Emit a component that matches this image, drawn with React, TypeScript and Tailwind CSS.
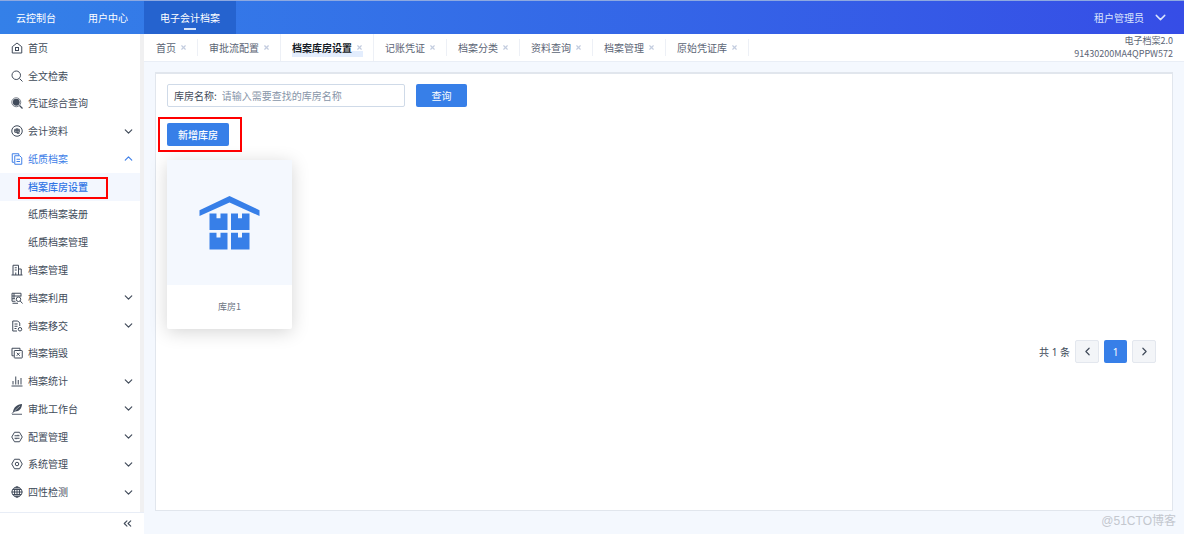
import { ReactNode, useState } from "react";
import { ChevronDown, ChevronLeft, ChevronRight, ChevronUp, ChevronsLeft, X } from "lucide-react";
import clsx from "clsx";

interface MenuItem {
  label: string;
  icon: ReactNode;
  expandable?: boolean;
  children?: string[];
}

const Icon = ({ children }: { children: ReactNode }) => (
  <svg
    viewBox="0 0 24 24"
    className="w-3 h-3 shrink-0"
    fill="none"
    stroke="currentColor"
    strokeWidth="2"
    aria-hidden="true"
  >
    {children}
  </svg>
);

const menu: MenuItem[] = [
  {
    label: "首页",
    icon: (
      <Icon>
        <path d="M2.5 22V9.5L12 2l9.5 7.5V22z" strokeLinejoin="round" />
        <rect x="9" y="11" width="6" height="6" />
      </Icon>
    ),
  },
  {
    label: "全文检索",
    icon: (
      <Icon>
        <circle cx="10.5" cy="10.5" r="8.5" />
        <path d="M17 17l6 6" />
      </Icon>
    ),
  },
  {
    label: "凭证综合查询",
    icon: (
      <Icon>
        <circle cx="10.5" cy="10.5" r="9" strokeWidth="1.4" />
        <circle cx="10.5" cy="10.5" r="6.8" fill="currentColor" stroke="none" />
        <path d="M17 17l6 6" strokeWidth="2.4" />
      </Icon>
    ),
  },
  {
    label: "会计资料",
    expandable: true,
    icon: (
      <Icon>
        <circle cx="12" cy="12" r="10.5" />
        <path d="M7.5 8.5h9v6h-9zM7.5 11.5h9M12 6v10.5h5" />
      </Icon>
    ),
  },
  {
    label: "纸质档案",
    expandable: true,
    children: ["档案库房设置", "纸质档案装册", "纸质档案管理"],
    icon: (
      <Icon>
        <path d="M6 18.5H2.5v-17h13V5" />
        <path d="M7.5 5.5h10l4 4v13h-14z" />
        <path d="M11 12.5h7M11 17h7" />
      </Icon>
    ),
  },
  {
    label: "档案管理",
    icon: (
      <Icon>
        <path d="M4 22V2.5h11V22M15 10h5.5v12M1 22h22" />
        <path d="M7.5 7.5h4M7.5 12h4M9.5 22v-5" />
      </Icon>
    ),
  },
  {
    label: "档案利用",
    expandable: true,
    icon: (
      <Icon>
        <path d="M9 18.5H2V2.5h18V9M2 8h18M6 2.5V14M2 13.5h6" />
        <circle cx="15" cy="14.5" r="4.5" />
        <path d="M18.5 18l4.5 5M3 22.5h11" />
      </Icon>
    ),
  },
  {
    label: "档案移交",
    expandable: true,
    icon: (
      <Icon>
        <path d="M12 22H3.5V2h10l4 4v6" />
        <path d="M7 8h6M7 12.5h6M7 17h4" />
        <circle cx="18" cy="18.5" r="3.5" />
      </Icon>
    ),
  },
  {
    label: "档案销毁",
    icon: (
      <Icon>
        <path d="M5.5 17.5H2v-15h16V6" />
        <rect x="6.5" y="7" width="16" height="15" rx="1" />
        <path d="M11.5 11.5l6 6M17.5 11.5l-6 6" />
      </Icon>
    ),
  },
  {
    label: "档案统计",
    expandable: true,
    icon: (
      <Icon>
        <path d="M1 22h22M4 19v-7M9.5 19V3M14.5 19V10M20 19V6" />
      </Icon>
    ),
  },
  {
    label: "审批工作台",
    expandable: true,
    icon: (
      <Icon>
        <path d="M4 18C5 9 12 3 22 2c0 8-5 15-14 15z" fill="currentColor" stroke="none" />
        <path d="M7 16L18 6" stroke="white" strokeWidth="1" />
        <path d="M2 21l5-5M2 22.5h20" strokeWidth="1.8" />
      </Icon>
    ),
  },
  {
    label: "配置管理",
    expandable: true,
    icon: (
      <Icon>
        <path d="M7 2.5h10l5.5 9.5L17 21.5H7L1.5 12z" strokeLinejoin="round" />
        <path d="M7 9.5h10M7 14.5h10M14 7.5v2M10 14.5v2" />
      </Icon>
    ),
  },
  {
    label: "系统管理",
    expandable: true,
    icon: (
      <Icon>
        <path d="M7 2.5h10l5.5 9.5L17 21.5H7L1.5 12z" strokeLinejoin="round" />
        <circle cx="12" cy="12" r="3.5" />
      </Icon>
    ),
  },
  {
    label: "四性检测",
    expandable: true,
    icon: (
      <Icon>
        <circle cx="12" cy="12" r="10" />
        <ellipse cx="12" cy="12" rx="5" ry="10" />
        <path d="M1 12h22M12 1v22M3.5 7h17M3.5 17h17" />
      </Icon>
    ),
  },
];

const topNav = ["云控制台", "用户中心", "电子会计档案"];

const tabs = [
  "首页",
  "审批流配置",
  "档案库房设置",
  "记账凭证",
  "档案分类",
  "资料查询",
  "档案管理",
  "原始凭证库",
];

const WarehouseIcon = () => (
  <svg viewBox="0 0 61 54" className="w-[61px] h-[54px]" fill="#377fe8" aria-hidden="true">
    <path d="M.5 14.2L30.5 0l30 14.2V20l-30-13.4L.5 20z" />
    <path d="M10.5 17.5h7v4.8h4v-4.8h7V34h-18z" />
    <path d="M32 17.5h7v4.8h4v-4.8h7.5V34H32z" />
    <path d="M10.5 36.8h7v4.8h4v-4.8h7v16.7h-18z" />
    <path d="M32 36.8h7v4.8h4v-4.8h7.5v16.7H32z" />
  </svg>
);

const Header = () => (
  <header className="h-[34px] shrink-0 flex justify-between border-t border-[#8ea9e0] bg-linear-to-r from-[#3480e8] to-[#364de6] text-white">
    <nav className="flex">
      {topNav.map((item, index) => (
        <a
          key={item}
          href="#"
          className={clsx(
            "relative flex items-center px-4",
            index === 2 && "bg-[#2563cf]"
          )}
        >
          {item}
          {index === 2 && (
            <span className="absolute left-1/2 bottom-1 -translate-x-1/2 w-3 h-0.5 bg-[#d5e3fa]" />
          )}
        </a>
      ))}
    </nav>
    <button className="flex items-center gap-2 pr-[15px] text-[#dbe5fc]">
      租户管理员
      <ChevronDown size={17} />
    </button>
  </header>
);

const Sidebar = () => {
  const [opened, setOpened] = useState("纸质档案");
  const [current, setCurrent] = useState("档案库房设置");

  return (
    <aside className="w-36 shrink-0 flex flex-col bg-white">
      <nav className="flex-1 flex flex-col pb-1.5 border-r-4 border-[#f0f0f1]">
        {menu.map((item) => {
          const isOpen = !!item.children && opened === item.label;
          const Arrow = isOpen ? ChevronUp : ChevronDown;
          return [
            <button
              key={item.label}
              onClick={() => setOpened(isOpen ? "" : item.label)}
              className={clsx(
                "flex-1 flex items-center gap-[5px] pl-[11px] pr-[5px] text-left",
                isOpen && "text-[#4080e8]"
              )}
            >
              {item.icon}
              <span className="flex-1">{item.label}</span>
              {item.expandable && <Arrow size={13} strokeWidth={2.2} />}
            </button>,
            ...(isOpen ? item.children! : []).map((child) => (
              <a
                key={child}
                href="#"
                onClick={() => setCurrent(child)}
                className={clsx(
                  "relative flex-1 flex items-center pl-7",
                  current === child && "bg-[#f3f7fe] text-[#2f74e4] font-medium"
                )}
              >
                {child}
                {child === "档案库房设置" && (
                  <span className="absolute left-[18px] top-1 w-[90px] h-[22px] border-2 border-[#ff0000]" />
                )}
              </a>
            )),
          ];
        })}
      </nav>
      <div className="h-[22px] flex items-center justify-end pr-2.5 border-t border-[#e8edf6]">
        <button aria-label="收起菜单">
          <ChevronsLeft size={13} />
        </button>
      </div>
    </aside>
  );
};

const TabBar = () => {
  const [active, setActive] = useState("档案库房设置");

  return (
    <div className="h-7 shrink-0 flex justify-between bg-white border-b border-[#e9eef6] text-[#5b6475]">
      <div className="flex items-center pl-px">
        {tabs.map((tab, index) => {
          const isActive = tab === active;
          return (
            <div
              key={tab}
              className={clsx(
                "flex items-center pl-[11px] pr-[10px] border-r border-[#edf0f6]",
                isActive || tabs[index + 1] === active ? "h-full" : "h-[17px]"
              )}
            >
              <div
                className={clsx(
                  "flex items-center gap-1 h-[18px]",
                  isActive &&
                    "text-[#151b26] font-bold bg-linear-to-t from-[#e3edfd] from-33% to-transparent to-33%"
                )}
              >
                <button onClick={() => setActive(tab)}>{tab}</button>
                <button aria-label={`关闭${tab}`} className="text-[#c3ccdf]">
                  <X size={7} strokeWidth={4} />
                </button>
              </div>
            </div>
          );
        })}
      </div>
      <div className="pr-[11px] text-right text-[9px] leading-[13px]">
        <div>电子档案2.0</div>
        <div>91430200MA4QPPW572</div>
      </div>
    </div>
  );
};

const Pagination = () => (
  <div className="flex items-center justify-end gap-[5px] pr-[5px] font-['Noto_Sans','Noto_Sans_CJK_SC',sans-serif]">
    <span>共 1 条</span>
    <button
      aria-label="上一页"
      className="w-6 h-[23px] flex items-center justify-center bg-[#f3f5f8] border border-[#e3e7ee] rounded-xs"
    >
      <ChevronLeft size={13} strokeWidth={2.2} />
    </button>
    <button className="w-[23px] h-[23px] bg-[#377fe8] rounded-xs text-white">1</button>
    <button
      aria-label="下一页"
      className="w-6 h-[23px] flex items-center justify-center bg-[#f3f5f8] border border-[#e3e7ee] rounded-xs"
    >
      <ChevronRight size={13} strokeWidth={2.2} />
    </button>
  </div>
);

const App = () => {
  const [keyword, setKeyword] = useState("");

  return (
    <div className="min-h-screen flex flex-col bg-[#f4f8fe] font-['Noto_Sans_CJK_SC',sans-serif] text-[10px] leading-[14px] text-[#414b5a]">
      <Header />
      <div className="flex-1 flex">
        <Sidebar />
        <div className="flex-1 flex flex-col">
          <TabBar />
          <main className="flex-1 flex flex-col px-[11px] pt-2.5">
            <section className="flex-1 flex flex-col gap-[11px] px-[11px] py-2.5 bg-white border border-t-2 border-[#e1e6ed]">
              <form className="flex gap-[11px]" onSubmit={(e) => e.preventDefault()}>
                <div className="w-[238px] h-[23px] flex items-center gap-[5px] px-1.5 border border-[#cfdae8] rounded-xs">
                  <label htmlFor="name">库房名称:</label>
                  <input
                    id="name"
                    value={keyword}
                    onChange={(e) => setKeyword(e.target.value)}
                    placeholder="请输入需要查找的库房名称"
                    className="flex-1 min-w-0 outline-none placeholder:text-[#8795a8]"
                  />
                </div>
                <button className="w-[51px] h-[23px] bg-[#377fe8] rounded-xs text-white">
                  查询
                </button>
              </form>
              <div className="relative flex mt-[5px]">
                <button className="w-[62px] h-[23px] bg-[#377fe8] rounded-xs text-white font-medium">
                  新增库房
                </button>
                <span className="absolute -left-[9px] -top-1.5 w-[84px] h-[35px] border-2 border-[#ff0000] pointer-events-none" />
              </div>
              <div className="flex mt-[3px]">
                <div className="w-[125px] rounded-xs bg-white shadow-[0_3px_18px_rgba(0,0,0,0.17)]">
                  <div className="h-[125px] flex items-center justify-center bg-[#f4f8fe]">
                    <WarehouseIcon />
                  </div>
                  <div className="h-11 flex items-center justify-center text-[9px] text-[#6b7482]">
                    库房1
                  </div>
                </div>
              </div>
              <Pagination />
            </section>
          </main>
          <footer className="h-[23px] flex items-center justify-end pr-2 pb-1 font-['Liberation_Sans','Noto_Sans_CJK_SC',sans-serif] text-xs text-[#c3c7ce]">
            @51CTO博客
          </footer>
        </div>
      </div>
    </div>
  );
};

export default App;
